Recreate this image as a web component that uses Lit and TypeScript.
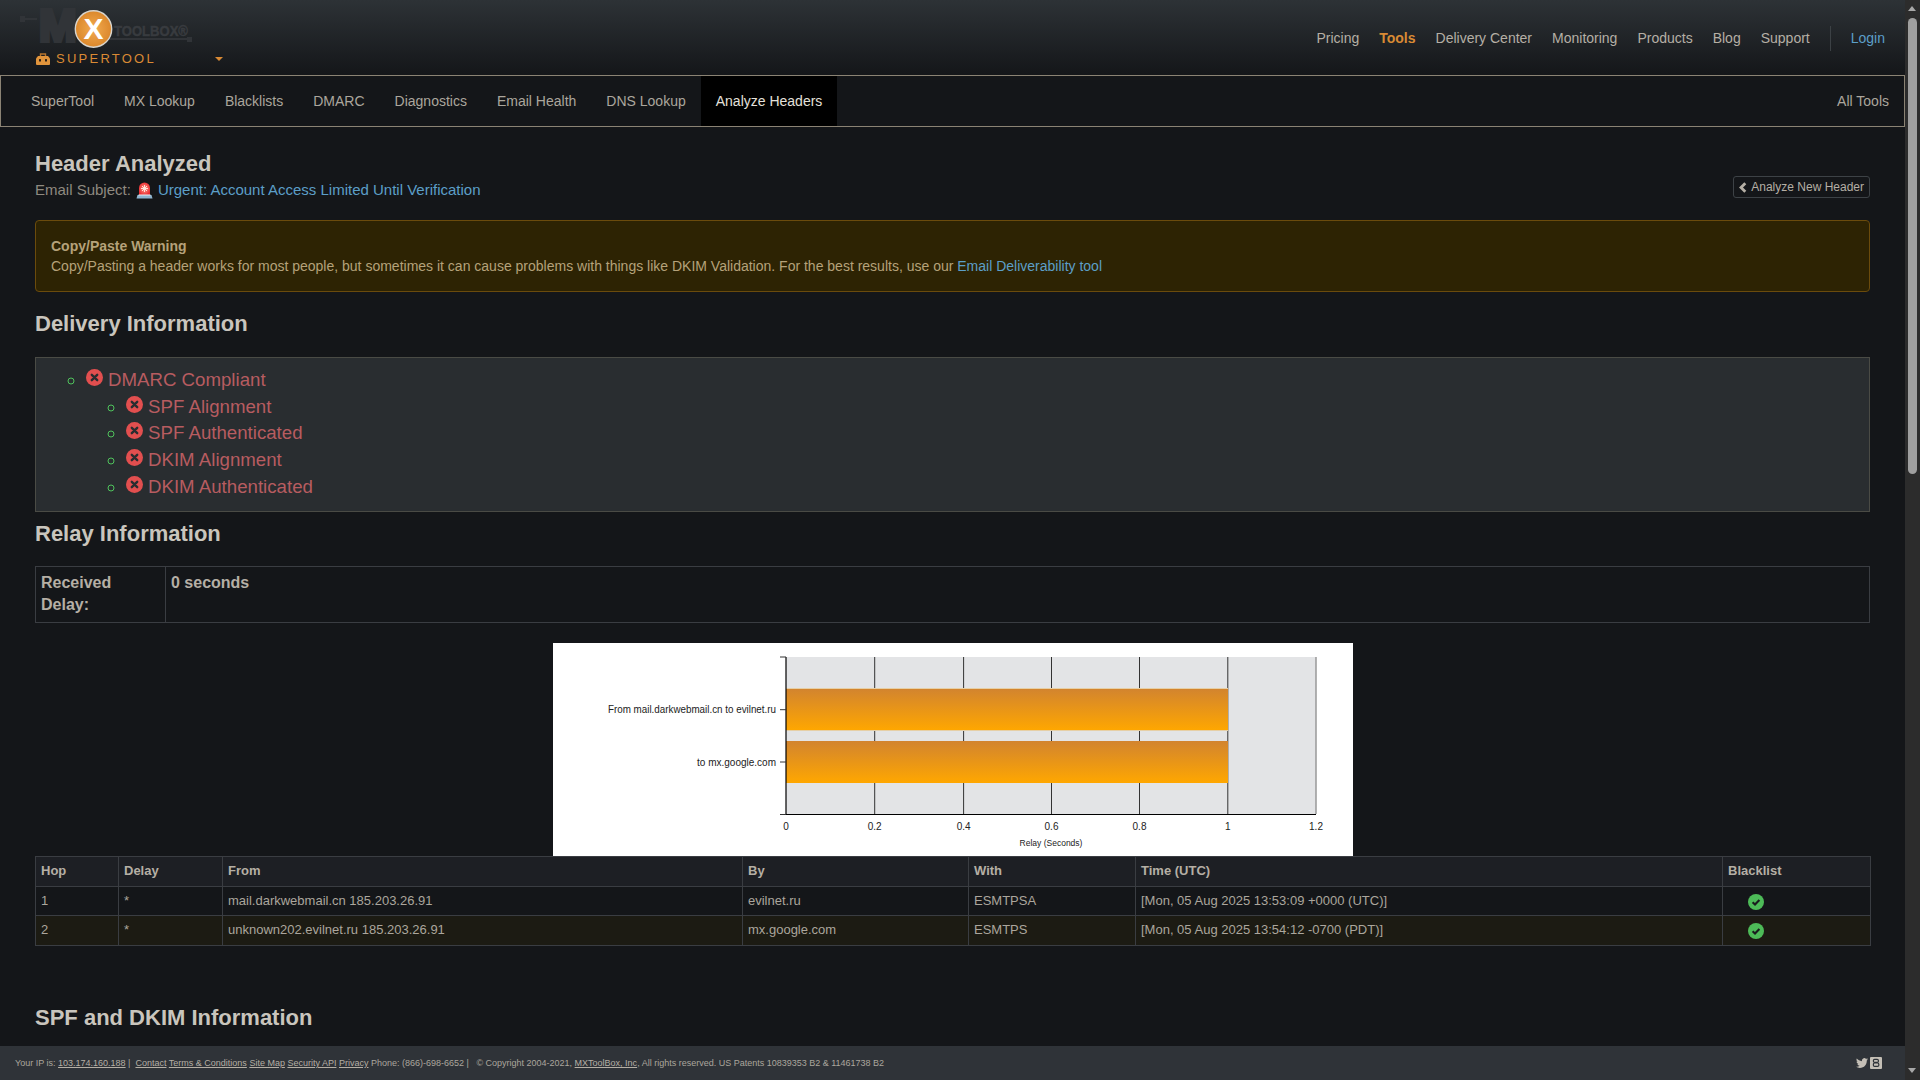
import { LitElement, html, css, svg } from "lit";
import { customElement } from "lit/decorators.js";

const topLinks = ["Pricing", "Tools", "Delivery Center", "Monitoring", "Products", "Blog", "Support"];
const toolLinks = ["SuperTool", "MX Lookup", "Blacklists", "DMARC", "Diagnostics", "Email Health", "DNS Lookup", "Analyze Headers"];
const checks = ["SPF Alignment", "SPF Authenticated", "DKIM Alignment", "DKIM Authenticated"];
const hops = [
  ["1", "*", "mail.darkwebmail.cn 185.203.26.91", "evilnet.ru", "ESMTPSA", "[Mon, 05 Aug 2025 13:53:09 +0000 (UTC)]"],
  ["2", "*", "unknown202.evilnet.ru 185.203.26.91", "mx.google.com", "ESMTPS", "[Mon, 05 Aug 2025 13:54:12 -0700 (PDT)]"],
];

const failIcon = html`<svg class="status" viewBox="0 0 17 17">
  <circle cx="8.5" cy="8.5" r="8.5" fill="#e24f4f"></circle>
  <path d="M5.8 5.8l5.4 5.4M11.2 5.8l-5.4 5.4" stroke="#292d30" stroke-width="2.4" stroke-linecap="round"></path>
</svg>`;

const okIcon = html`<svg class="ok" viewBox="0 0 16 16">
  <circle cx="8" cy="8" r="8" fill="#4dbb58"></circle>
  <path d="M4.6 8.2l2.4 2.3 4.4-4.6" fill="none" stroke="#1a1c1e" stroke-width="2.1"></path>
</svg>`;

const sirenIcon = html`<svg class="siren" viewBox="0 0 17 18">
  <defs>
    <radialGradient id="lamp" cx="50%" cy="50%" r="55%">
      <stop offset="0" stop-color="#ff9d8c"></stop>
      <stop offset="1" stop-color="#ea2a2f"></stop>
    </radialGradient>
  </defs>
  <path d="M3 14V7a5.5 5.5 0 0 1 11 0v7z" fill="url(#lamp)"></path>
  <path d="M8.5 4v7M5 7.5h7M6 5l5 5M11 5l-5 5" stroke="#ffe3da" stroke-width="1"></path>
  <path d="M1.5 14h14l1 3.5H.5z" fill="#8fb4cf"></path>
  <path d="M2.5 14h12" stroke="#e6eef3" stroke-width="1"></path>
</svg>`;

const toolboxIcon = html`<svg class="toolbox" viewBox="0 0 14 12">
  <path d="M4.5 3V1h5v2" fill="none" stroke="#b8752e" stroke-width="1.4"></path>
  <path d="M2 3h10l2 2.5V11a1 1 0 0 1-1 1H1a1 1 0 0 1-1-1V5.5z" fill="#e0943c"></path>
  <rect x="3" y="6" width="2" height="2.4" rx=".5" fill="#2a2018"></rect>
  <rect x="9" y="6" width="2" height="2.4" rx=".5" fill="#2a2018"></rect>
</svg>`;

const logo = html`<svg class="logo" viewBox="0 0 200 50">
  <defs>
    <radialGradient id="orb" cx="50%" cy="50%" r="55%">
      <stop offset="0" stop-color="#f2ab50"></stop>
      <stop offset="1" stop-color="#d98428"></stop>
    </radialGradient>
  </defs>
  <path d="M20 19h17" stroke="#313438" stroke-width="2"></path>
  <rect x="20" y="16" width="5" height="6" fill="#313438"></rect>
  <text x="39" y="41" class="logo-m">M</text>
  <path d="M100 39h89" stroke="#313438" stroke-width="2"></path>
  <rect x="187" y="37" width="5" height="5" fill="#313438"></rect>
  <text x="114" y="36" class="logo-word" textLength="74" lengthAdjust="spacingAndGlyphs">TOOLBOX®</text>
  <circle cx="93.5" cy="29" r="18.2" fill="url(#orb)" stroke="#d8d4cc" stroke-width="1.4"></circle>
  <text x="93.5" y="39" class="logo-x" text-anchor="middle">X</text>
</svg>`;

const chart = () => {
  const grid = [321.7, 410.6, 498.5, 586.5, 674.8];
  const ticks = [
    [233, "0"], [321.7, "0.2"], [410.6, "0.4"], [498.5, "0.6"], [586.5, "0.8"], [674.8, "1"], [763, "1.2"],
  ] as [number, string][];
  return html`<svg class="chart" viewBox="0 0 800 213" width="800" height="213">
    <defs>
      <linearGradient id="bar" x1="0" y1="0" x2="0" y2="1">
        <stop offset="0" stop-color="#d2842f"></stop>
        <stop offset="1" stop-color="#ffa700"></stop>
      </linearGradient>
    </defs>
    <rect width="800" height="213" fill="#fff"></rect>
    <rect x="233" y="14" width="530" height="157" fill="#e3e4e6"></rect>
    ${grid.map((x) => svg`<path d="M${x} 14v157" stroke="#333" stroke-width="1"></path>`)}
    <path d="M763 14v157" stroke="#999" stroke-width="1.5"></path>
    <rect x="233" y="45.5" width="442" height="42" fill="url(#bar)"></rect>
    <rect x="233" y="98" width="442" height="42" fill="url(#bar)"></rect>
    <path d="M233 45.5h442M233 87.5h442" stroke="#e6cfa6" stroke-width="1"></path>
    <path d="M233 14v157.5H763" fill="none" stroke="#000" stroke-width="1.2"></path>
    <path d="M227 14h6M227 66.7h6M227 119h6M227 171.5h6" stroke="#333" stroke-width="1"></path>
    <text x="223" y="70" text-anchor="end" textLength="168" lengthAdjust="spacingAndGlyphs">From mail.darkwebmail.cn to evilnet.ru</text>
    <text x="223" y="122.5" text-anchor="end">to mx.google.com</text>
    ${ticks.map(([x, t]) => svg`<text x=${x} y="186.5" text-anchor="middle">${t}</text>`)}
    <text x="498" y="203" text-anchor="middle" class="axis">Relay (Seconds)</text>
  </svg>`;
};

@customElement("app-root")
export class AppRoot extends LitElement {
  static styles = css`
    :host {
      display: flex;
      width: 100%;
      height: 100vh;
      overflow: hidden;
      background: #141619;
      color: #aba69d;
      font-family: "Liberation Sans", Arial, sans-serif;
      font-size: 14px;
    }

    .page {
      flex: 1;
      min-width: 0;
      position: relative;
      overflow: hidden;
    }

    a {
      color: #5c9fc8;
      text-decoration: none;
    }

    .top {
      height: 75px;
      box-sizing: border-box;
      background: linear-gradient(#2d3236, #141619);
      display: flex;
      justify-content: space-between;
    }

    .brand {
      width: 240px;
    }

    .logo {
      display: block;
      width: 200px;
      height: 50px;
    }

    .logo-m {
      font-size: 45px;
      font-weight: 700;
      fill: #313438;
      stroke: #313438;
      stroke-width: 4px;
    }

    .logo-word {
      font-size: 15px;
      font-weight: 700;
      fill: #383b3f;
      stroke: #383b3f;
      stroke-width: 0.5px;
    }

    .logo-x {
      font-size: 30px;
      font-weight: 700;
      fill: #fff;
    }

    .super {
      display: flex;
      align-items: center;
      padding-left: 36px;
      margin-top: 1px;
      color: #d98a34;
      font-size: 13px;
      line-height: 15px;
      letter-spacing: 2.25px;
    }

    .toolbox {
      width: 14px;
      height: 12px;
      margin-right: 6px;
    }

    .caret {
      width: 0;
      height: 0;
      margin-left: 59px;
      border-style: solid;
      border-width: 4px 4px 0;
      border-color: #d98a34 transparent transparent;
    }

    .top-links {
      display: flex;
      align-items: center;
      height: 76px;
      padding-right: 20px;
    }

    .top-links a {
      color: #b5afa5;
      margin-left: 20px;
    }

    .top-links a.on {
      color: #d98a34;
      font-weight: 700;
    }

    .top-links .sep {
      width: 1px;
      height: 25px;
      margin-left: 20px;
      background: #3c4145;
    }

    .top-links a.login {
      color: #5c9fc8;
    }

    .tools {
      height: 52px;
      box-sizing: border-box;
      border: 1px solid #8b8374;
      display: flex;
      padding-left: 15px;
    }

    .tools a {
      display: flex;
      align-items: center;
      padding: 0 15px;
      color: #aba69d;
    }

    .tools a.on {
      background: #000;
      color: #e4e1db;
    }

    .tools a.all {
      margin-left: auto;
    }

    .content {
      padding: 0 35px;
    }

    .title-row {
      display: flex;
      justify-content: space-between;
      align-items: flex-end;
      padding-top: 24px;
    }

    h2,
    h3 {
      margin: 0;
      font-weight: 700;
      color: #c9c5bd;
      font-size: 22px;
      line-height: 25px;
    }

    .subject {
      display: flex;
      align-items: center;
      margin-top: 3px;
      font-size: 15px;
      line-height: 21px;
      color: #8f8a80;
    }

    .siren {
      width: 17px;
      height: 18px;
      margin: 0 5px;
    }

    .back {
      display: flex;
      align-items: center;
      box-sizing: border-box;
      height: 22px;
      padding: 0 5px;
      margin-bottom: 2px;
      border: 1px solid #3d4246;
      border-radius: 3px;
      font-size: 12px;
      color: #b5afa5;
    }

    .back svg {
      width: 8px;
      height: 11px;
      margin-right: 4px;
    }

    .alert {
      box-sizing: border-box;
      height: 72px;
      margin-top: 20px;
      padding: 15px;
      border: 1px solid #6b4b0c;
      border-radius: 4px;
      background: #2d2303;
      color: #b5a27a;
      line-height: 20px;
    }

    .alert b {
      display: block;
    }

    .section {
      margin-top: 19px;
    }

    .well {
      box-sizing: border-box;
      height: 155px;
      margin-top: 21px;
      padding: 9px 9px 9px 10px;
      border: 1px solid #4a4b45;
      background: #292d30;
      font-size: 18.67px;
      line-height: 26.67px;
      color: #b75c60;
    }

    ul {
      margin: 0;
      padding-left: 40px;
      list-style: circle;
    }

    li::marker {
      color: #4fc35c;
    }

    .status {
      width: 17px;
      height: 17px;
      margin-right: 5px;
      vertical-align: 0;
    }

    .relay-head {
      margin-top: 9px;
    }

    table {
      width: 100%;
      border-collapse: collapse;
      table-layout: fixed;
    }

    td,
    th {
      border: 1px solid #3a3d42;
      padding: 5px;
      text-align: left;
      vertical-align: top;
    }

    .delay {
      margin-top: 20px;
      font-size: 16px;
      font-weight: 700;
      line-height: 22px;
      color: #b5afa5;
    }

    .delay td {
      height: 45px;
    }

    .chart-wrap {
      display: flex;
      justify-content: center;
      margin-top: 20px;
    }

    .chart {
      display: block;
    }

    .chart text {
      font-size: 10px;
      fill: #222;
    }

    .chart text.axis {
      font-size: 8.5px;
    }

    .hops {
      font-size: 13px;
      line-height: 18px;
    }

    .hops th {
      background: #1d1f24;
      color: #b5afa5;
      padding: 5px 5px 6px;
    }

    .hops td {
      line-height: 18px;
    }

    .hops tbody tr:nth-child(2) td {
      background: #1c1b13;
      padding-bottom: 6px;
    }

    .ok {
      display: block;
      width: 16px;
      height: 16px;
      margin: 1.5px 0 0 20px;
    }

    .spf-head {
      margin-top: 59px;
    }

    .footer {
      position: absolute;
      left: 0;
      right: 0;
      bottom: 0;
      height: 34px;
      box-sizing: border-box;
      padding: 0 23px 0 15px;
      display: flex;
      align-items: center;
      justify-content: space-between;
      background: #2f3338;
      font-size: 9px;
      color: #aba69d;
    }

    .footer a {
      color: #b5afa5;
      text-decoration: underline;
    }

    .social {
      display: flex;
      align-items: center;
      gap: 2px;
    }

    .social svg {
      display: block;
      width: 12px;
      height: 12px;
    }

    .scroll {
      position: relative;
      width: 15px;
      background: #2c2c2c;
    }

    .scroll .thumb {
      position: absolute;
      left: 3px;
      right: 3px;
      top: 18px;
      height: 456px;
      border-radius: 5px;
      background: #9f9f9f;
    }

    .scroll .up,
    .scroll .down {
      position: absolute;
      left: 3px;
      width: 0;
      height: 0;
      border-style: solid;
      border-color: transparent;
    }

    .scroll .up {
      top: 6px;
      border-width: 0 4.5px 5px;
      border-bottom-color: #a8a8a8;
    }

    .scroll .down {
      bottom: 7px;
      border-width: 5px 4.5px 0;
      border-top-color: #a8a8a8;
    }
  `;

  render() {
    return html`
      <div class="page">
        <div class="top">
          <div class="brand">
            ${logo}
            <div class="super">${toolboxIcon}SUPERTOOL<span class="caret"></span></div>
          </div>
          <div class="top-links">
            ${topLinks.map((l) => html`<a class=${l === "Tools" ? "on" : ""}>${l}</a>`)}
            <span class="sep"></span>
            <a class="login">Login</a>
          </div>
        </div>

        <div class="tools">
          ${toolLinks.map((l) => html`<a class=${l === "Analyze Headers" ? "on" : ""}>${l}</a>`)}
          <a class="all">All Tools</a>
        </div>

        <div class="content">
          <div class="title-row">
            <div>
              <h2>Header Analyzed</h2>
              <div class="subject">
                Email Subject:${sirenIcon}
                <a>Urgent: Account Access Limited Until Verification</a>
              </div>
            </div>
            <div class="back">
              <svg viewBox="0 0 8 11"><path d="M6.3 1.2L2 5.5l4.3 4.3" fill="none" stroke="#b5afa5" stroke-width="2.8"></path></svg>
              Analyze New Header
            </div>
          </div>

          <div class="alert">
            <b>Copy/Paste Warning</b>
            Copy/Pasting a header works for most people, but sometimes it can cause problems with things like DKIM Validation. For the best results, use our
            <a>Email Deliverability tool</a>
          </div>

          <h3 class="section">Delivery Information</h3>
          <div class="well">
            <ul>
              <li>
                ${failIcon}DMARC Compliant
                <ul>
                  ${checks.map((c) => html`<li>${failIcon}${c}</li>`)}
                </ul>
              </li>
            </ul>
          </div>

          <h3 class="relay-head">Relay Information</h3>
          <table class="delay">
            <colgroup><col style="width:130px" /><col /></colgroup>
            <tr><td>Received Delay:</td><td>0 seconds</td></tr>
          </table>

          <div class="chart-wrap">${chart()}</div>

          <table class="hops">
            <colgroup>
              <col style="width:83px" /><col style="width:104px" /><col style="width:520px" /><col style="width:226px" />
              <col style="width:167px" /><col style="width:587px" /><col style="width:148px" />
            </colgroup>
            <thead>
              <tr><th>Hop</th><th>Delay</th><th>From</th><th>By</th><th>With</th><th>Time (UTC)</th><th>Blacklist</th></tr>
            </thead>
            <tbody>
              ${hops.map(
                (row) => html`<tr>
                  ${row.map((c) => html`<td>${c}</td>`)}
                  <td>${okIcon}</td>
                </tr>`,
              )}
            </tbody>
          </table>

          <h3 class="spf-head">SPF and DKIM Information</h3>
        </div>

        <div class="footer">
          <div>
            Your IP is: <a>103.174.160.188</a> | &nbsp;<a>Contact</a> <a>Terms &amp; Conditions</a> <a>Site Map</a>
            <a>Security API</a> <a>Privacy</a> Phone: (866)-698-6652 | &nbsp; © Copyright 2004-2021,
            <a>MXToolBox, Inc</a>, All rights reserved. US Patents 10839353 B2 &amp; 11461738 B2
          </div>
          <div class="social">
            <svg viewBox="0 0 24 24"><path fill="#c4bfb6" d="M23.953 4.57a10 10 0 01-2.825.775 4.958 4.958 0 002.163-2.723c-.951.555-2.005.959-3.127 1.184a4.92 4.92 0 00-8.384 4.482C7.69 8.095 4.067 6.13 1.64 3.162a4.822 4.822 0 00-.666 2.475c0 1.71.87 3.213 2.188 4.096a4.904 4.904 0 01-2.228-.616v.06a4.923 4.923 0 003.946 4.827 4.996 4.996 0 01-2.212.085 4.936 4.936 0 004.604 3.417 9.867 9.867 0 01-6.102 2.105c-.39 0-.779-.023-1.17-.067a13.995 13.995 0 007.557 2.209c9.053 0 13.998-7.496 13.998-13.985 0-.21 0-.42-.015-.63A9.935 9.935 0 0024 4.59z"></path></svg>
            <svg viewBox="0 0 12 12">
              <rect width="12" height="12" rx="1" fill="#c4bfb6"></rect>
              <rect x="3.4" y="2.4" width="5" height="3" rx="1.2" fill="none" stroke="#2f3338" stroke-width="1.2"></rect>
              <rect x="3.4" y="6" width="5.4" height="3.4" rx="1.2" fill="none" stroke="#2f3338" stroke-width="1.2"></rect>
            </svg>
          </div>
        </div>
      </div>
      <div class="scroll">
        <span class="up"></span>
        <div class="thumb"></div>
        <span class="down"></span>
      </div>
    `;
  }
}
